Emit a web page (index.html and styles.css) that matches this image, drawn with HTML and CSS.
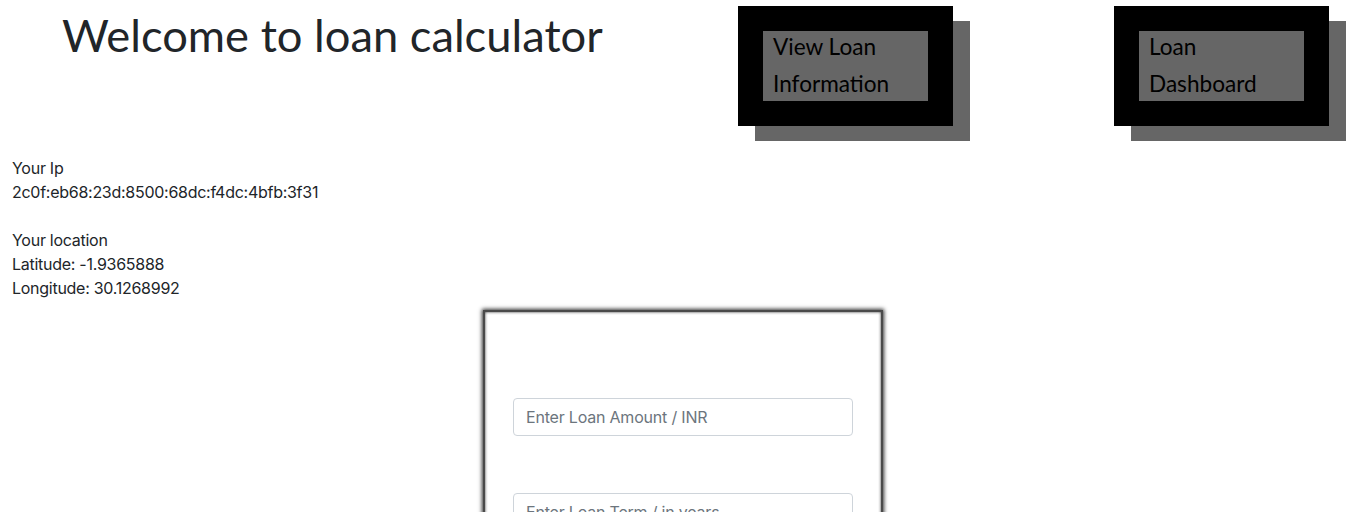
FILE: index.html
```html
<!DOCTYPE html>
<html lang="en">
<head>
<meta charset="utf-8">
<title>Loan calculator</title>
<link rel="stylesheet" href="styles.css">
</head>
<body>
<header class="header">
  <h1 class="title">Welcome to loan calculator</h1>
  <nav class="nav">
    <a class="nav-btn" href="#"><span class="nav-inner"><span class="nav-text">View Loan Information</span></span></a>
    <a class="nav-btn" href="#"><span class="nav-inner"><span class="nav-text">Loan Dashboard</span></span></a>
  </nav>
</header>
<section class="info">
  <div>Your Ip</div>
  <div>2c0f:eb68:23d:8500:68dc:f4dc:4bfb:3f31</div>
  <div class="spacer"></div>
  <div>Your location</div>
  <div>Latitude: -1.9365888</div>
  <div>Longitude: 30.1268992</div>
</section>
<form class="card">
  <div class="field"><input class="form-control" type="text" placeholder="Enter Loan Amount / INR"></div>
  <div class="field"><input class="form-control" type="text" placeholder="Enter Loan Term / in years"></div>
</form>
</body>
</html>
```

FILE: styles.css
```css
html, body {
  margin: 0;
  padding: 0;
  background: #fff;
}
body {
  font-family: Inter, "Noto Sans", "Liberation Sans", sans-serif;
  font-size: 16px;
  line-height: 24px;
  color: #212529;
}
.header {
  display: flex;
  align-items: flex-start;
  height: 126px;
  padding: 6px 0 0 62px;
  box-sizing: border-box;
}
.title {
  margin: 0;
  font-family: Lato, "Open Sans", sans-serif;
  font-weight: 400;
  font-size: 45.3px;
  line-height: 58px;
  color: #212529;
}
.nav {
  display: flex;
  gap: 161px;
  margin-left: auto;
  padding-right: 29px;
}
.nav-btn {
  display: block;
  border: 25px solid #000;
  background: #000;
  box-shadow: 17px 15px 0 #666;
  text-decoration: none;
}
.nav-inner {
  display: flow-root;
  width: 165px;
  height: 70px;
  box-sizing: border-box;
  padding: 0 10px;
  background: #666;
  font-family: Lato, "Open Sans", sans-serif;
  font-size: 22.6px;
  line-height: 36.5px;
  color: #000;
}
.nav-text {
  display: block;
  margin-top: -2px;
}
.info {
  padding: 30px 12px 0;
  letter-spacing: -0.27px;
}
.spacer {
  height: 24px;
}
.card {
  width: 400px;
  box-sizing: border-box;
  margin: 10px 0 0 calc(50% - 196px);
  padding: 86px 28px 0;
  border: 2px solid #4a4a4a;
  box-shadow: 0 0 4px 1px #333, inset 0 0 3px #333;
  height: 260px;
}
.field {
  margin-bottom: 57px;
}
.form-control {
  display: block;
  width: 100%;
  height: 38px;
  box-sizing: border-box;
  padding: 6px 12px;
  font-family: Inter, "Noto Sans", sans-serif;
  font-size: 16px;
  letter-spacing: -0.2px;
  color: #495057;
  border: 1px solid #ced4da;
  border-radius: 4px;
  background: #fff;
}
.form-control::placeholder {
  color: #6c757d;
}
```
